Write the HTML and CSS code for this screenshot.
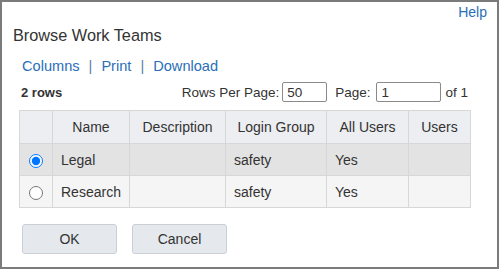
FILE: index.html
```html
<!DOCTYPE html>
<html>
<head>
    <meta charset="utf-8">
    <link rel="stylesheet" href="styles.css">
</head>
<body>
    <div class="dialog">
        <div class="help"><a href="#">Help</a></div>
        <div class="title">Browse Work Teams</div>

        <div class="content">
            <div class="links">
                <a href="#">Columns</a><span class="sep">|</span><a href="#">Print</a><span class="sep">|</span><a href="#">Download</a>
            </div>

            <!-- Pager -->
            <div class="toolbar">
                <span class="count">2 rows</span>
                <div class="pager">
                    <label>Rows Per Page:</label>
                    <input class="field per-page" type="text" value="50">
                    <label class="page-label">Page:</label>
                    <input class="field page" type="text" value="1">
                    <span>of 1</span>
                </div>
            </div>

            <table class="grid">
                <colgroup>
                    <col style="width: 33px">
                    <col style="width: 77px">
                    <col style="width: 96px">
                    <col style="width: 101px">
                    <col style="width: 82px">
                    <col style="width: 62px">
                </colgroup>
                <thead>
                    <tr>
                        <th></th>
                        <th>Name</th>
                        <th>Description</th>
                        <th>Login Group</th>
                        <th>All Users</th>
                        <th>Users</th>
                    </tr>
                </thead>
                <tbody>
                    <tr class="selected">
                        <td class="pick"><input type="radio" name="team" checked></td>
                        <td>Legal</td>
                        <td></td>
                        <td>safety</td>
                        <td>Yes</td>
                        <td></td>
                    </tr>
                    <tr>
                        <td class="pick"><input type="radio" name="team"></td>
                        <td>Research</td>
                        <td></td>
                        <td>safety</td>
                        <td>Yes</td>
                        <td></td>
                    </tr>
                </tbody>
            </table>

            <div class="buttons">
                <button class="btn">OK</button>
                <button class="btn">Cancel</button>
            </div>
        </div>
    </div>
</body>
</html>
```

FILE: styles.css
```css
body {
    margin: 0;
    font-family: "Liberation Sans", Arial, sans-serif;
    color: #333;
    background: white;
}

a {
    color: #2a6fb8;
    text-decoration: none;
}

.dialog {
    box-sizing: border-box;
    width: 499px;
    height: 269px;
    padding: 2px 10px 0 11px;
    border: 2px solid #7b7b7b;
}

.help {
    text-align: right;
    font-size: 14px;
    line-height: 16px;
}

.title {
    margin-top: 5px;
    font-size: 16.3px;
    line-height: 20px;
}

.content {
    width: 451px;
    margin-left: 6px;
}

.links {
    margin-top: 12px;
    padding-left: 3px;
    font-size: 14.6px;
    line-height: 18px;
}

.links .sep {
    margin: 0 9px;
    color: #5b7fa8;
}

.toolbar {
    display: flex;
    justify-content: space-between;
    align-items: center;
    margin-top: 7px;
    height: 20px;
    font-size: 13.5px;
}

.count {
    padding-left: 2px;
    font-size: 13px;
    font-weight: bold;
}

.pager {
    display: flex;
    align-items: center;
    padding-right: 2px;
}

.field {
    box-sizing: border-box;
    height: 20px;
    margin: 0 4px 0 3px;
    padding: 0 4px;
    border: 1px solid #8a8a8a;
    border-radius: 2px;
    font-family: inherit;
    font-size: 13.5px;
    color: #333;
}

.per-page {
    width: 45px;
    margin-right: 8px;
}

.page {
    width: 65px;
    margin-left: 6px;
}

.grid {
    width: 451px;
    margin-top: 8px;
    border-collapse: collapse;
    table-layout: fixed;
    font-size: 14px;
}

.grid th,
.grid td {
    height: 31px;
    padding: 0 8px;
    border: 1px solid #d7d7d7;
    text-align: left;
    font-weight: normal;
    white-space: nowrap;
}

.grid th {
    height: 32px;
    background: #eceef1;
    text-align: center;
}

.grid tbody tr {
    background: #f5f5f5;
}

.grid tbody tr.selected {
    background: #e3e3e3;
}

.grid td.pick {
    padding: 0;
    text-align: center;
}

.pick input {
    width: 14px;
    height: 14px;
    margin: 0;
    vertical-align: middle;
}

.buttons {
    display: flex;
    gap: 15px;
    margin-top: 16px;
    padding-left: 3px;
}

.btn {
    box-sizing: border-box;
    width: 95px;
    height: 30px;
    background: #e5e8ec;
    border: 1px solid #c9cfd6;
    border-radius: 3px;
    font-family: inherit;
    font-size: 14px;
    color: #333;
}
```
